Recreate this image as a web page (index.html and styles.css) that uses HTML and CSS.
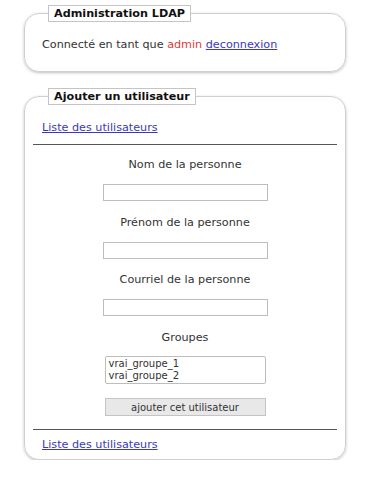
FILE: index.html
```html
<!DOCTYPE html>
<html lang="fr">
<head>
    <meta charset="UTF-8">
    <title>Administration LDAP</title>
    <link rel="stylesheet" href="styles.css">
</head>
<body>
    <fieldset class="box box-top">
        <legend>Administration LDAP</legend>
        <p class="line">Connecté en tant que <span class="user">admin</span> <a href="#">deconnexion</a></p>
    </fieldset>

    <fieldset class="box box-form">
        <legend>Ajouter un utilisateur</legend>
        <p class="line"><a href="#">Liste des utilisateurs</a></p>
        <hr>
        <form class="user-form">
            <div class="field">
                <label for="nom">Nom de la personne</label>
                <input type="text" id="nom">
            </div>
            <div class="field">
                <label for="prenom">Prénom de la personne</label>
                <input type="text" id="prenom">
            </div>
            <div class="field">
                <label for="mail">Courriel de la personne</label>
                <input type="text" id="mail">
            </div>
            <div class="field">
                <label for="groupes">Groupes</label>
                <select id="groupes" multiple size="2">
                    <option>vrai_groupe_1</option>
                    <option>vrai_groupe_2</option>
                </select>
            </div>
            <button type="button" class="submit">ajouter cet utilisateur</button>
        </form>
        <hr class="bottom-rule">
        <p class="line"><a href="#">Liste des utilisateurs</a></p>
    </fieldset>
</body>
</html>
```

FILE: styles.css
```css
/* base */
* {
    box-sizing: border-box;
}

body {
    margin: 0;
    padding-top: 5px;
    background: #fff;
    font-family: "DejaVu Sans", sans-serif;
    font-size: 11.2px;
    color: #333;
}

a {
    color: #3a3ab8;
}

/* cadres */
.box {
    margin: 0 22px 0 24px;
    padding: 0 8px 18px;
    border: 1px solid #cfcfcf;
    border-radius: 15px;
    box-shadow: 0 1px 3px rgba(0, 0, 0, 0.25);
}

.box legend {
    margin-left: 15px;
    padding: 0 5px;
    height: 17px;
    line-height: 15px;
    border: 1px solid #c4c4c4;
    background: #fff;
    font-weight: bold;
    color: #111;
}

.box-form {
    margin-top: 16px;
    padding-bottom: 6px;
}

.line {
    margin: 15px 0 0;
    padding-left: 9px;
    line-height: 16px;
}

.user {
    color: #d83c3c;
}

hr {
    margin: 8px 0 0;
    border: 0;
    border-top: 1px solid #555;
}

/* formulaire */
.user-form {
    display: flex;
    flex-direction: column;
    align-items: center;
    padding-top: 12px;
}

.field {
    display: flex;
    flex-direction: column;
    align-items: center;
    gap: 11px;
    margin-bottom: 13.5px;
}

.field label {
    line-height: 16px;
}

.field input {
    width: 165px;
    height: 17px;
    border: 1px solid #bdbdbd;
    background: #fff;
}

.field select {
    width: 161px;
    height: 28px;
    margin-top: -1px;
    padding: 1px 3px;
    border: 1px solid #bdbdbd;
    font-family: "DejaVu Sans", sans-serif;
    font-size: 10px;
    color: #333;
    overflow: hidden;
}

.field select option {
    padding: 0;
    line-height: 12px;
}

.submit {
    width: 161px;
    height: 18px;
    margin-top: 1px;
    padding: 0;
    border: 1px solid #c4c4c4;
    background: #e8e8e8;
    font-family: "DejaVu Sans", sans-serif;
    font-size: 10px;
    color: #333;
}

.bottom-rule {
    margin-top: 13px;
}

.bottom-rule + .line {
    margin-top: 7px;
}
```
